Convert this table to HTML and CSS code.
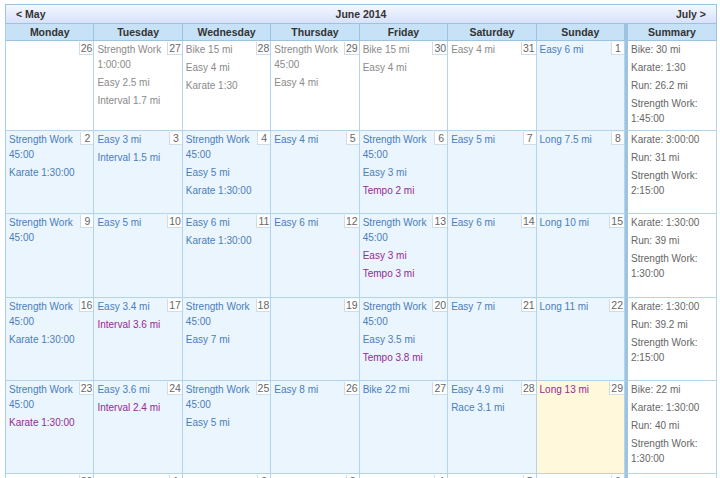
FILE: index.html
```html
<!DOCTYPE html>
<html>
<head>
<meta charset="utf-8">
<link rel="stylesheet" href="styles.css">
</head>
<body>
<div class="cal">
  <div class="bar">
    <span class="nav">&lt; May</span>
    <span class="title">June 2014</span>
    <span class="nav right">July &gt;</span>
  </div>
  <div class="grid">
    <div class="dh">Monday</div>
    <div class="dh">Tuesday</div>
    <div class="dh">Wednesday</div>
    <div class="dh">Thursday</div>
    <div class="dh">Friday</div>
    <div class="dh">Saturday</div>
    <div class="dh">Sunday</div>
    <div class="dh sum-h">Summary</div>

    <!-- week 1 -->
    <div class="cell other"><span class="d">26</span></div>
    <div class="cell other"><span class="d">27</span><div class="it">Strength Work 1:00:00</div><div class="it">Easy 2.5 mi</div><div class="it">Interval 1.7 mi</div></div>
    <div class="cell other"><span class="d">28</span><div class="it">Bike 15 mi</div><div class="it">Easy 4 mi</div><div class="it">Karate 1:30</div></div>
    <div class="cell other"><span class="d">29</span><div class="it">Strength Work 45:00</div><div class="it">Easy 4 mi</div></div>
    <div class="cell other"><span class="d">30</span><div class="it">Bike 15 mi</div><div class="it">Easy 4 mi</div></div>
    <div class="cell other"><span class="d">31</span><div class="it">Easy 4 mi</div></div>
    <div class="cell"><span class="d">1</span><div class="it">Easy 6 mi</div></div>
    <div class="sum"><div class="it">Bike: 30 mi</div><div class="it">Karate: 1:30</div><div class="it">Run: 26.2 mi</div><div class="it">Strength Work: 1:45:00</div></div>

    <!-- week 2 -->
    <div class="cell"><span class="d">2</span><div class="it">Strength Work 45:00</div><div class="it">Karate 1:30:00</div></div>
    <div class="cell"><span class="d">3</span><div class="it">Easy 3 mi</div><div class="it">Interval 1.5 mi</div></div>
    <div class="cell"><span class="d">4</span><div class="it">Strength Work 45:00</div><div class="it">Easy 5 mi</div><div class="it">Karate 1:30:00</div></div>
    <div class="cell"><span class="d">5</span><div class="it">Easy 4 mi</div></div>
    <div class="cell"><span class="d">6</span><div class="it">Strength Work 45:00</div><div class="it">Easy 3 mi</div><div class="it pl">Tempo 2 mi</div></div>
    <div class="cell"><span class="d">7</span><div class="it">Easy 5 mi</div></div>
    <div class="cell"><span class="d">8</span><div class="it">Long 7.5 mi</div></div>
    <div class="sum"><div class="it">Karate: 3:00:00</div><div class="it">Run: 31 mi</div><div class="it">Strength Work: 2:15:00</div></div>

    <!-- week 3 -->
    <div class="cell"><span class="d">9</span><div class="it">Strength Work 45:00</div></div>
    <div class="cell"><span class="d">10</span><div class="it">Easy 5 mi</div></div>
    <div class="cell"><span class="d">11</span><div class="it">Easy 6 mi</div><div class="it">Karate 1:30:00</div></div>
    <div class="cell"><span class="d">12</span><div class="it">Easy 6 mi</div></div>
    <div class="cell"><span class="d">13</span><div class="it">Strength Work 45:00</div><div class="it pl">Easy 3 mi</div><div class="it pl">Tempo 3 mi</div></div>
    <div class="cell"><span class="d">14</span><div class="it">Easy 6 mi</div></div>
    <div class="cell"><span class="d">15</span><div class="it">Long 10 mi</div></div>
    <div class="sum"><div class="it">Karate: 1:30:00</div><div class="it">Run: 39 mi</div><div class="it">Strength Work: 1:30:00</div></div>

    <!-- week 4 -->
    <div class="cell"><span class="d">16</span><div class="it">Strength Work 45:00</div><div class="it">Karate 1:30:00</div></div>
    <div class="cell"><span class="d">17</span><div class="it">Easy 3.4 mi</div><div class="it pl">Interval 3.6 mi</div></div>
    <div class="cell"><span class="d">18</span><div class="it">Strength Work 45:00</div><div class="it">Easy 7 mi</div></div>
    <div class="cell"><span class="d">19</span></div>
    <div class="cell"><span class="d">20</span><div class="it">Strength Work 45:00</div><div class="it">Easy 3.5 mi</div><div class="it pl">Tempo 3.8 mi</div></div>
    <div class="cell"><span class="d">21</span><div class="it">Easy 7 mi</div></div>
    <div class="cell"><span class="d">22</span><div class="it">Long 11 mi</div></div>
    <div class="sum"><div class="it">Karate: 1:30:00</div><div class="it">Run: 39.2 mi</div><div class="it">Strength Work: 2:15:00</div></div>

    <!-- week 5 -->
    <div class="cell"><span class="d">23</span><div class="it">Strength Work 45:00</div><div class="it pl">Karate 1:30:00</div></div>
    <div class="cell"><span class="d">24</span><div class="it">Easy 3.6 mi</div><div class="it pl">Interval 2.4 mi</div></div>
    <div class="cell"><span class="d">25</span><div class="it">Strength Work 45:00</div><div class="it">Easy 5 mi</div></div>
    <div class="cell"><span class="d">26</span><div class="it">Easy 8 mi</div></div>
    <div class="cell"><span class="d">27</span><div class="it">Bike 22 mi</div></div>
    <div class="cell"><span class="d">28</span><div class="it">Easy 4.9 mi</div><div class="it">Race 3.1 mi</div></div>
    <div class="cell today"><span class="d">29</span><div class="it pl">Long 13 mi</div></div>
    <div class="sum"><div class="it">Bike: 22 mi</div><div class="it">Karate: 1:30:00</div><div class="it">Run: 40 mi</div><div class="it">Strength Work: 1:30:00</div></div>

    <!-- week 6 -->
    <div class="cell other"><span class="d">30</span></div>
    <div class="cell other"><span class="d">1</span></div>
    <div class="cell other"><span class="d">2</span></div>
    <div class="cell other"><span class="d">3</span></div>
    <div class="cell other"><span class="d">4</span></div>
    <div class="cell other"><span class="d">5</span></div>
    <div class="cell other"><span class="d">6</span></div>
    <div class="sum"></div>
  </div>
</div>
</body>
</html>
```

FILE: styles.css
```css
html, body {
  margin: 0;
  padding: 0;
  background: #ffffff;
}
body {
  font-family: "Liberation Sans", Arial, sans-serif;
  font-size: 10px;
  color: #666;
}
.cal {
  margin: 4px 3px 0 5px;
  width: 712px;
}
.bar {
  display: flex;
  align-items: center;
  height: 18px;
  border: 1px solid #9cc3df;
  border-bottom: none;
  background: linear-gradient(#f4f7fe, #d7e1fa);
  padding: 0 10px;
  font-weight: bold;
  font-size: 10.5px;
  color: #333;
}
.bar .nav { width: 80px; }
.bar .right { text-align: right; }
.bar .title { flex: 1; text-align: center; }
.grid {
  display: grid;
  grid-template-columns: repeat(7, 1fr) 92px;
  grid-template-rows: 17px 90px 83px 84px 83px 93px 83px;
  border-left: 1px solid #a9cde6;
  border-top: 1px solid #9cc3df;
}
.dh {
  background: #c7e1f6;
  border-right: 1px solid #9cc3df;
  border-bottom: 1px solid #9cc3df;
  text-align: center;
  font-weight: bold;
  font-size: 10.5px;
  color: #333;
  line-height: 16px;
}
.cell {
  background: #eaf5fe;
  border-right: 1px solid #b3d4ea;
  border-bottom: 1px solid #b3d4ea;
  padding: 1px 0 1px 3px;
  color: #4a7dba;
  overflow: hidden;
}
.cell.other {
  background: #ffffff;
  color: #8a8a8a;
}
.cell.today {
  background: #fff8db;
}
.sum-h {
  border-left: 3px solid #9cc3df;
}
.sum {
  background: #fff;
  border-left: 3px solid #9cc3df;
  border-right: 1px solid #b3d4ea;
  border-bottom: 1px solid #b3d4ea;
  padding: 1px 0 1px 3px;
  color: #666;
}
.d {
  float: right;
  min-width: 10px;
  height: 12px;
  line-height: 12px;
  padding: 0 1px;
  text-align: center;
  background: #fff;
  border: 1px solid #cfdde8;
  border-top: none;
  border-right: none;
  color: #666;
  font-size: 10.5px;
  margin-left: 3px;
}
.it {
  line-height: 15px;
  margin-bottom: 3px;
}
.it.pl {
  color: #962a93;
}
```
